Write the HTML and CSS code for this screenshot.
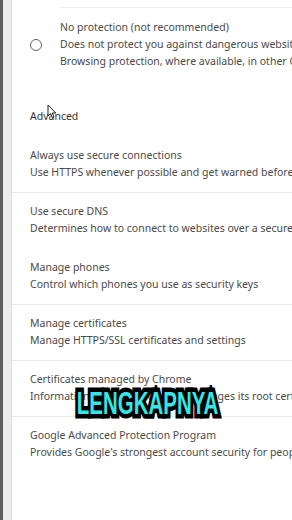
FILE: index.html
```html
<!DOCTYPE html>
<html lang="en">
<head>
    <meta charset="UTF-8">
    <meta name="viewport" content="width=device-width, initial-scale=1.0">
    <title>Privacy and security - Settings</title>
    <link rel="stylesheet" href="styles.css">
</head>
<body>
    <div class="page">
        <div class="card">
            <div class="radio-group">
                <div class="radio-divider"></div>
                <div class="radio-row">
                    <span class="radio"></span>
                    <div class="radio-text">
                        <div class="title">No protection (not recommended)</div>
                        <div class="sub">Does not protect you against dangerous websites, downloads, and extensions.</div>
                        <div class="sub">Browsing protection, where available, in other Google apps</div>
                    </div>
                </div>
            </div>

            <div class="section-title">Advanced</div>

            <div class="row">
                <div class="title">Always use secure connections</div>
                <div class="sub">Use HTTPS whenever possible and get warned before sites load</div>
            </div>
            <div class="row line">
                <div class="title">Use secure DNS</div>
                <div class="sub">Determines how to connect to websites over a secure connection</div>
            </div>
            <div class="row">
                <div class="title">Manage phones</div>
                <div class="sub">Control which phones you use as security keys</div>
            </div>
            <div class="row line">
                <div class="title">Manage certificates</div>
                <div class="sub">Manage HTTPS/SSL certificates and settings</div>
            </div>
            <div class="row line">
                <div class="title">Certificates managed by Chrome</div>
                <div class="sub">Information about how Chrome manages its root certificates</div>
            </div>
            <div class="row line">
                <div class="title">Google Advanced Protection Program</div>
                <div class="sub">Provides Google's strongest account security for people at risk</div>
            </div>
        </div>

        <!-- kursor mouse -->
        <svg class="cursor" width="10" height="15" viewBox="0 0 10 15">
            <path d="M1 1 L1 12 L3.6 9.6 L5.4 13.8 L7 13.1 L5.3 9 L8.8 9 Z" fill="#fff" stroke="#222" stroke-width="1" stroke-linejoin="round"/>
        </svg>

        <div class="caption"><span>LENGKAPNYA</span></div>
    </div>
</body>
</html>
```

FILE: styles.css
```css
body {
    margin: 0;
    font-family: "Noto Sans", "Open Sans", sans-serif;
    background-color: #eeeeee;
    overflow: hidden;
}
.page {
    position: relative;
    height: 520px;
    border-left: 3px solid #5e5e5e;
    padding-left: 8px;
    background-color: #ededed;
}
.card {
    background-color: #ffffff;
    border-left: 1px solid #dcdcdc;
    height: 520px;
    overflow: hidden;
    white-space: nowrap;
}
.title, .sub {
    font-size: 10.5px;
    line-height: 17px;
    color: #4a4a4a;
}
.radio-group {
    padding-top: 7px;
}
.radio-divider {
    height: 1px;
    margin-left: 48px;
    background-color: #ececec;
}
.radio-row {
    display: flex;
    align-items: center;
    padding: 11px 0;
}
.radio {
    flex: none;
    width: 10px;
    height: 10px;
    border: 1.5px solid #666666;
    border-radius: 50%;
    margin-left: 18px;
    margin-right: 18px;
}
.section-title {
    font-size: 10.5px;
    line-height: 17px;
    color: #333333;
    padding: 27px 0 11px 18px;
}
.row {
    border-top: 1px solid transparent;
    padding: 10px 0 11px 18px;
}
.row.line {
    border-top-color: #e9e9e9;
}
.cursor {
    position: absolute;
    left: 44px;
    top: 104px;
}
.caption {
    position: absolute;
    left: 0;
    right: 0;
    top: 385px;
    text-align: center;
    font-family: "Liberation Sans Narrow", "Liberation Sans", sans-serif;
    font-weight: bold;
    font-size: 32px;
    line-height: 36px;
    color: #35e6e6;
}
.caption span {
    display: inline-block;
    transform: scaleX(0.64);
    -webkit-text-stroke: 9px #000000;
    paint-order: stroke fill;
}
```
